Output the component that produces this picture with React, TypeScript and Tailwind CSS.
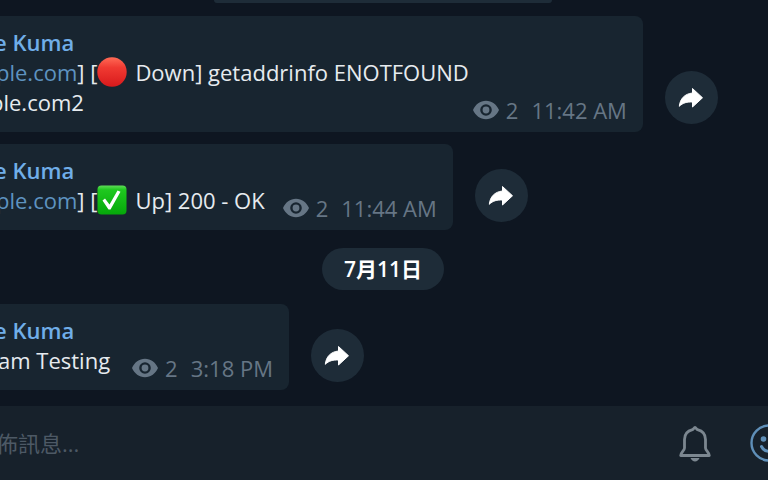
import { useState } from "react";
import type { ReactNode } from "react";

// --- Icons ---

const EyeIcon = () => (
  <svg viewBox="0 0 26 20" className="h-5 w-[26px]" fill="currentColor" aria-hidden="true">
    <path
      fillRule="evenodd"
      d="M13 0.8C7.2 0.8 2.400 4.400 0 10c2.400 5.600 7.200 9.200 13 9.200s10.600-3.600 13-9.200C23.600 4.400 18.800 0.800 13 0.800Zm0 15a5.800 5.800 0 1 1 0-11.600 5.800 5.800 0 0 1 0 11.600Z"
    />
    <circle cx="13" cy="10" r="3.400" />
  </svg>
);

const ShareIcon = () => (
  <svg viewBox="0 0 26 22" className="h-[22px] w-[26px]" fill="currentColor" aria-hidden="true">
    <path
      d="M14.500 1.500 24.500 10.800 14.500 20v-5C9 14.700 5 15.800 1.300 19.300 2 12 6.500 6.800 14.500 6Z"
      stroke="currentColor"
      strokeWidth="1"
      strokeLinejoin="round"
    />
  </svg>
);

const RedCircle = () => (
  <svg viewBox="0 0 30 30" className="size-[30px]" role="img" aria-label="Down">
    <defs>
      <linearGradient id="red-fill" x1="0" y1="0" x2="0" y2="1">
        <stop offset="0" stopColor="#ff6a55" />
        <stop offset="0.350" stopColor="#f03a32" />
        <stop offset="1" stopColor="#d81a1c" />
      </linearGradient>
    </defs>
    <circle cx="15" cy="15" r="14.700" fill="url(#red-fill)" />
  </svg>
);

const GreenCheck = () => (
  <svg viewBox="0 0 30 30" className="size-[30px]" role="img" aria-label="Up">
    <defs>
      <linearGradient id="green-fill" x1="0" y1="0" x2="0" y2="1">
        <stop offset="0" stopColor="#5fdc58" />
        <stop offset="0.150" stopColor="#1fc81f" />
        <stop offset="1" stopColor="#05a80a" />
      </linearGradient>
    </defs>
    <rect x="0.500" y="0.500" width="29" height="29" rx="4" fill="url(#green-fill)" />
    <path d="M5.500 15.500 8 13.500l4.500 6L20.500 5.500l3 1.200L13.500 24.500h-2Z" fill="#fff" />
  </svg>
);

const BellIcon = () => (
  <svg
    viewBox="0 0 34 38"
    className="h-[38px] w-[34px]"
    fill="none"
    stroke="currentColor"
    strokeWidth="2.800"
    strokeLinejoin="round"
    aria-hidden="true"
  >
    <path d="M17 3.500c-1 0-1.300 1.600-2.500 2.200C9.500 7 6.500 10.800 6.500 15.500v8.500c0 2.500-3.800 4.500-3.800 7.500h28.600c0-3-3.800-5-3.800-7.500v-8.500c0-4.700-3-8.500-8-9.800C18.300 5.100 18 3.500 17 3.500Z" />
    <path d="M12.500 34h9c-1 2.300-2.500 3.500-4.500 3.500s-3.500-1.200-4.500-3.500Z" fill="currentColor" stroke="none" />
  </svg>
);

const SmileIcon = () => (
  <svg
    viewBox="0 0 38 38"
    className="size-[38px]"
    fill="none"
    stroke="currentColor"
    strokeWidth="2.400"
    strokeLinecap="round"
    aria-hidden="true"
  >
    <circle cx="19" cy="19" r="17.500" />
    <circle cx="13.500" cy="15" r="2.800" fill="currentColor" stroke="none" />
    <circle cx="24.500" cy="15" r="2.800" fill="currentColor" stroke="none" />
    <path d="M11.500 22.500c1.500 3 4.300 4.800 7.500 4.800s6-1.800 7.500-4.800" strokeWidth="3" />
  </svg>
);

// --- Sub-components ---

const Message = ({
  time,
  gap,
  children,
}: {
  time: string;
  gap: string;
  children: ReactNode;
}) => (
  <article className="flex items-end gap-[22px]">
    <div className={`flex items-end rounded-r-lg bg-[#182530] pt-[11px] pr-4 ${gap}`}>
      <div className="pb-[15px] text-[22px] leading-[30px] whitespace-nowrap text-[#e6ebef]">
        <p className="-ml-1 font-semibold text-[#70aee8]">e Kuma</p>
        {children}
      </div>
      <div className="flex items-center pb-[7px] text-[22px] leading-[30px] whitespace-nowrap text-[#667685]">
        <EyeIcon />
        <span className="ml-[7px]">2</span>
        <time className="ml-[13px]">{time}</time>
      </div>
    </div>
    <button
      type="button"
      aria-label="Share"
      className="mb-2 flex size-[53px] items-center justify-center rounded-full bg-[#1e2c38] text-white"
    >
      <ShareIcon />
    </button>
  </article>
);

const DomainLink = () => (
  <a href="#domain" className="text-[#5e93c0]">
    ple.com
  </a>
);

export default function App() {
  const [draft, setDraft] = useState("");

  return (
    <div className="flex min-h-screen flex-col overflow-hidden bg-[#0e1621] font-['Open_Sans','Noto_Sans_CJK_TC',sans-serif]">
      <main className="-ml-[2px] flex flex-col items-start">
        <div className="h-[3px] w-[338px] self-center rounded-b-full bg-[#1e2c38]" />

        <div className="mt-[13px] flex flex-col gap-3">
          <Message time="11:42 AM" gap="gap-1">
            <p className="-ml-[2px] flex items-center">
              <DomainLink />] [<RedCircle />
              <span className="ml-2">Down] getaddrinfo ENOTFOUND</span>
            </p>
            <p className="-ml-2">ple.com2</p>
          </Message>
          <Message time="11:44 AM" gap="gap-[18px]">
            <p className="-ml-[2px] flex items-center">
              <DomainLink />] [<GreenCheck />
              <span className="ml-2">Up] 200 - OK</span>
            </p>
          </Message>
        </div>

        <div className="mt-[18px] mb-[14px] self-center rounded-full bg-[#1e2c38] px-[22px] py-[6px] text-[21px] leading-[30px] font-semibold text-white">
          7月11日
        </div>

        <Message time="3:18 PM" gap="gap-[22px]">
          <p>am Testing</p>
        </Message>
      </main>

      <footer className="mt-4 flex grow items-center bg-[#17212b] text-[#7c8790]">
        <input
          type="text"
          aria-label="Message"
          placeholder="佈訊息..."
          value={draft}
          onChange={(e) => setDraft(e.target.value)}
          className="-ml-1 min-w-0 grow bg-transparent text-[22px] leading-[30px] text-[#e6ebef] outline-none placeholder:text-[#4d5965]"
        />
        <button type="button" aria-label="Mute notifications">
          <BellIcon />
        </button>
        <button type="button" aria-label="Emoji" className="-mr-5 ml-[38px] text-[#5f8fb8]">
          <SmileIcon />
        </button>
      </footer>
    </div>
  );
}
